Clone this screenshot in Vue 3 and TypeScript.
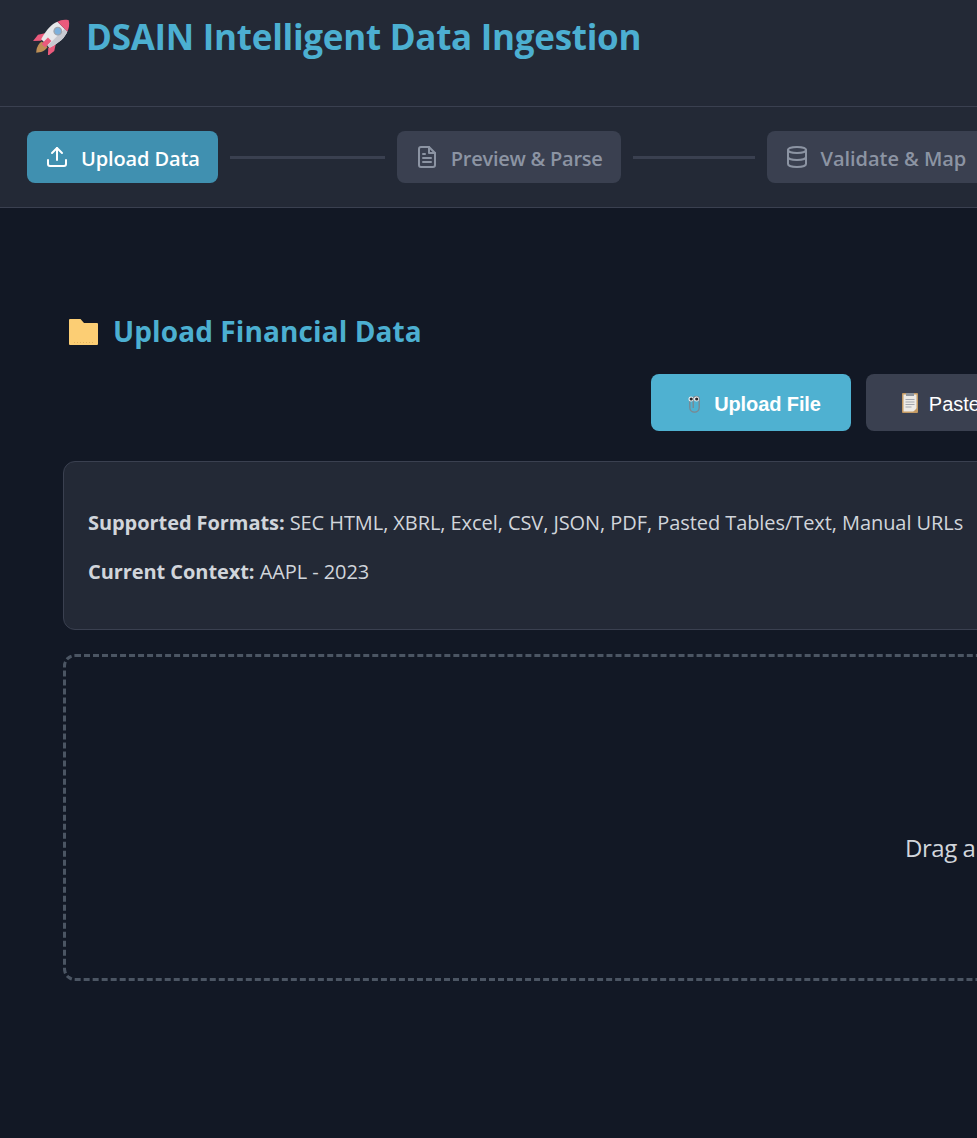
<script setup lang="ts">
const formats = 'SEC HTML, XBRL, Excel, CSV, JSON, PDF, Pasted Tables/Text, Manual URLs'
</script>

<template>
  <div class="page">
    <header class="top">
      <svg class="rocket" viewBox="0 0 38 36" width="38" height="36" aria-hidden="true">
        <g transform="translate(19.5 17.5) rotate(45)">
          <path d="M-4 11H4C5 16 3 20 0 23C-3 20-5 16-4 11z" fill="#bd8f55" />
          <path d="M-7 2L-11.500 9L-10.500 17L-5 11z" fill="#ea5a7c" />
          <path d="M7 2L11.500 9L10.500 17L5 11z" fill="#ea5a7c" />
          <path d="M-7-14H7C9.500-8 9.500-1 6 10H-6C-9.500-1-9.500-8-7-14z" fill="#e7e7ea" />
          <path d="M3-14H7C9.500-8 9.500-1 6 10H3z" fill="#c9c9d0" />
          <path d="M0-23C4-20.500 6-17 7-14H-7C-6-17-4-20.500 0-23z" fill="#ea5a7c" />
          <path d="M-2.500 4H2.500V13H-2.500z" fill="#ea5a7c" />
          <circle cx="0" cy="-7.500" r="3.800" fill="#7db0dc" stroke="#9fa3ac" stroke-width="1.200" />
        </g>
      </svg>
      <h1>DSAIN Intelligent Data Ingestion</h1>
    </header>

    <nav class="steps">
      <div class="step active">
        <svg viewBox="0 0 24 24" width="24" height="24" fill="none" stroke="currentColor" stroke-width="2" stroke-linecap="round" stroke-linejoin="round" aria-hidden="true">
          <path d="M21 15v4a2 2 0 0 1-2 2H5a2 2 0 0 1-2-2v-4" />
          <path d="M17 8l-5-5-5 5" />
          <path d="M12 3v12" />
        </svg>
        <span>Upload Data</span>
      </div>
      <div class="line first"></div>
      <div class="step">
        <svg viewBox="0 0 24 24" width="24" height="24" fill="none" stroke="currentColor" stroke-width="2" stroke-linecap="round" stroke-linejoin="round" aria-hidden="true">
          <path d="M14 2H6a2 2 0 0 0-2 2v16a2 2 0 0 0 2 2h12a2 2 0 0 0 2-2V8z" />
          <path d="M14 2v6h6" />
          <path d="M16 13H8" />
          <path d="M16 17H8" />
          <path d="M10 9H8" />
        </svg>
        <span>Preview &amp; Parse</span>
      </div>
      <div class="line second"></div>
      <div class="step last">
        <svg viewBox="0 0 24 24" width="24" height="24" fill="none" stroke="currentColor" stroke-width="2" stroke-linecap="round" stroke-linejoin="round" aria-hidden="true">
          <ellipse cx="12" cy="5" rx="9" ry="3" />
          <path d="M3 5v14c0 1.700 4 3 9 3s9-1.300 9-3V5" />
          <path d="M3 12c0 1.700 4 3 9 3s9-1.300 9-3" />
        </svg>
        <span>Validate &amp; Map</span>
      </div>
    </nav>

    <main class="content">
      <div class="heading">
        <svg class="folder" viewBox="0 0 29 26" width="29" height="26" aria-hidden="true">
          <path d="M1 0h10.500L15 4h13a1 1 0 0 1 1 1v20a1 1 0 0 1-1 1H1a1 1 0 0 1-1-1V1a1 1 0 0 1 1-1z" fill="#fcce74" />
          <path d="M5 23.500h21" stroke="#e3b360" stroke-width="1" stroke-dasharray="1 2" />
        </svg>
        <h2>Upload Financial Data</h2>
      </div>

      <div class="tabs">
        <button class="tab primary" type="button">
          <svg viewBox="0 0 27 22" width="27" height="22" aria-hidden="true">
            <path d="M8.800 7v8.500a4.700 4.700 0 0 0 9.400 0V7.500a3 3 0 0 0-6 0v8.500" fill="none" stroke="#7d868d" stroke-width="1.300" />
            <circle cx="10" cy="7" r="2.500" fill="#eef0f2" />
            <circle cx="15.500" cy="7" r="2.500" fill="#eef0f2" />
            <circle cx="10.200" cy="7" r="1.600" fill="#26282c" />
            <circle cx="15.700" cy="7" r="1.600" fill="#26282c" />
          </svg>
          <span>Upload File</span>
        </button>
        <button class="tab" type="button">
          <svg viewBox="0 0 27 22" width="27" height="22" aria-hidden="true">
            <rect x="6" y="1" width="16" height="20" rx="1" fill="#c49a63" />
            <rect x="7.500" y="2.500" width="13" height="17" fill="#eceae6" />
            <rect x="10" y="1" width="8" height="3" fill="#8e949c" />
            <path d="M9.500 7.500h9M9.500 10h9M9.500 12.500h9M9.500 15h6" stroke="#a3a7ae" stroke-width="1" />
            <path d="M17 20l4-4v4z" fill="#c49a63" />
          </svg>
          <span>Paste Text</span>
        </button>
        <button class="tab wide" type="button">
          <span>Manual URLs</span>
        </button>
      </div>

      <section class="info">
        <p><strong>Supported Formats:</strong> {{ formats }}</p>
        <p><strong>Current Context:</strong> AAPL - 2023</p>
      </section>

      <section class="drop">
        <p>Drag and drop a file</p>
      </section>
    </main>
  </div>
</template>

<style>
html, body {
  margin: 0;
  background: #121825;
  overflow: hidden;
}
</style>

<style scoped>
.page {
  width: 2020px;
  height: 1138px;
  overflow: hidden;
  background: #121825;
  color: #d1d5db;
  font-family: "Open Sans", "Noto Sans", sans-serif;
}
.top {
  display: flex;
  align-items: flex-start;
  gap: 15px;
  height: 87px;
  padding: 19px 0 0 33px;
  background: #232936;
  border-bottom: 1px solid #3a4050;
}
.rocket { flex: none; }
h1 {
  margin: -3px 0 0;
  font-size: 35px;
  line-height: 42px;
  font-weight: 700;
  letter-spacing: -0.28px;
  color: #4cafd1;
}
.steps {
  display: flex;
  align-items: center;
  gap: 12px;
  height: 100px;
  padding-left: 27px;
  background: #232936;
  border-bottom: 1px solid #3a4050;
}
.step {
  display: flex;
  align-items: center;
  gap: 12px;
  height: 52px;
  padding: 0 18px;
  border-radius: 8px;
  background: #3a4050;
  color: #8c94a3;
  font-size: 20px;
  font-weight: 600;
  letter-spacing: -0.25px;
}
.step span { padding-top: 2px; }
.step.active {
  background: #4090b0;
  color: #fff;
  letter-spacing: -0.12px;
}
.step.last { letter-spacing: -0.05px; }
.line {
  height: 3px;
  background: #3a4050;
  margin-top: 1px;
}
.line.first { width: 155px; }
.line.second { width: 122px; }
.content {
  padding: 107px 63px 0;
}
.heading {
  display: flex;
  align-items: center;
  gap: 15px;
  height: 34px;
  margin-left: 6px;
}
.folder { flex: none; }
h2 {
  margin: -2px 0 0;
  font-size: 28px;
  line-height: 34px;
  font-weight: 700;
  letter-spacing: 0.1px;
  color: #4cafd1;
}
.tabs {
  display: flex;
  justify-content: center;
  gap: 15px;
  margin-top: 25px;
}
.tab {
  display: flex;
  align-items: center;
  gap: 6px;
  height: 57px;
  padding: 0 30px;
  border: 0;
  border-radius: 8px;
  background: #3a4050;
  color: #fff;
  font-family: "Liberation Sans", Arial, sans-serif;
  font-size: 20px;
}
.tab span { padding-top: 4px; }
.tab svg { margin-top: 1px; }
.tab.primary {
  background: #4fb1d1;
  font-weight: 700;
  letter-spacing: -0.1px;
}
.tab.wide {
  width: 302px;
  justify-content: center;
}
.info {
  margin-top: 30px;
  padding: 24px;
  height: 119px;
  background: #232936;
  border: 1px solid #3a4050;
  border-radius: 12px;
}
.info p {
  margin: 0 0 19px;
  font-size: 20px;
  line-height: 30px;
  letter-spacing: -0.07px;
  color: #d1d5db;
}
.info p:first-child { margin-top: 22px; }
.info strong { font-weight: 700; }
.drop {
  display: flex;
  align-items: center;
  justify-content: center;
  box-sizing: border-box;
  height: 327px;
  margin-top: 24px;
  padding-top: 60px;
  border: 3px dashed #4b5563;
  border-radius: 12px;
}
.drop p {
  margin: 0 0 0 3px;
  font-size: 24px;
  letter-spacing: -0.45px;
  color: #d1d5db;
}
</style>
